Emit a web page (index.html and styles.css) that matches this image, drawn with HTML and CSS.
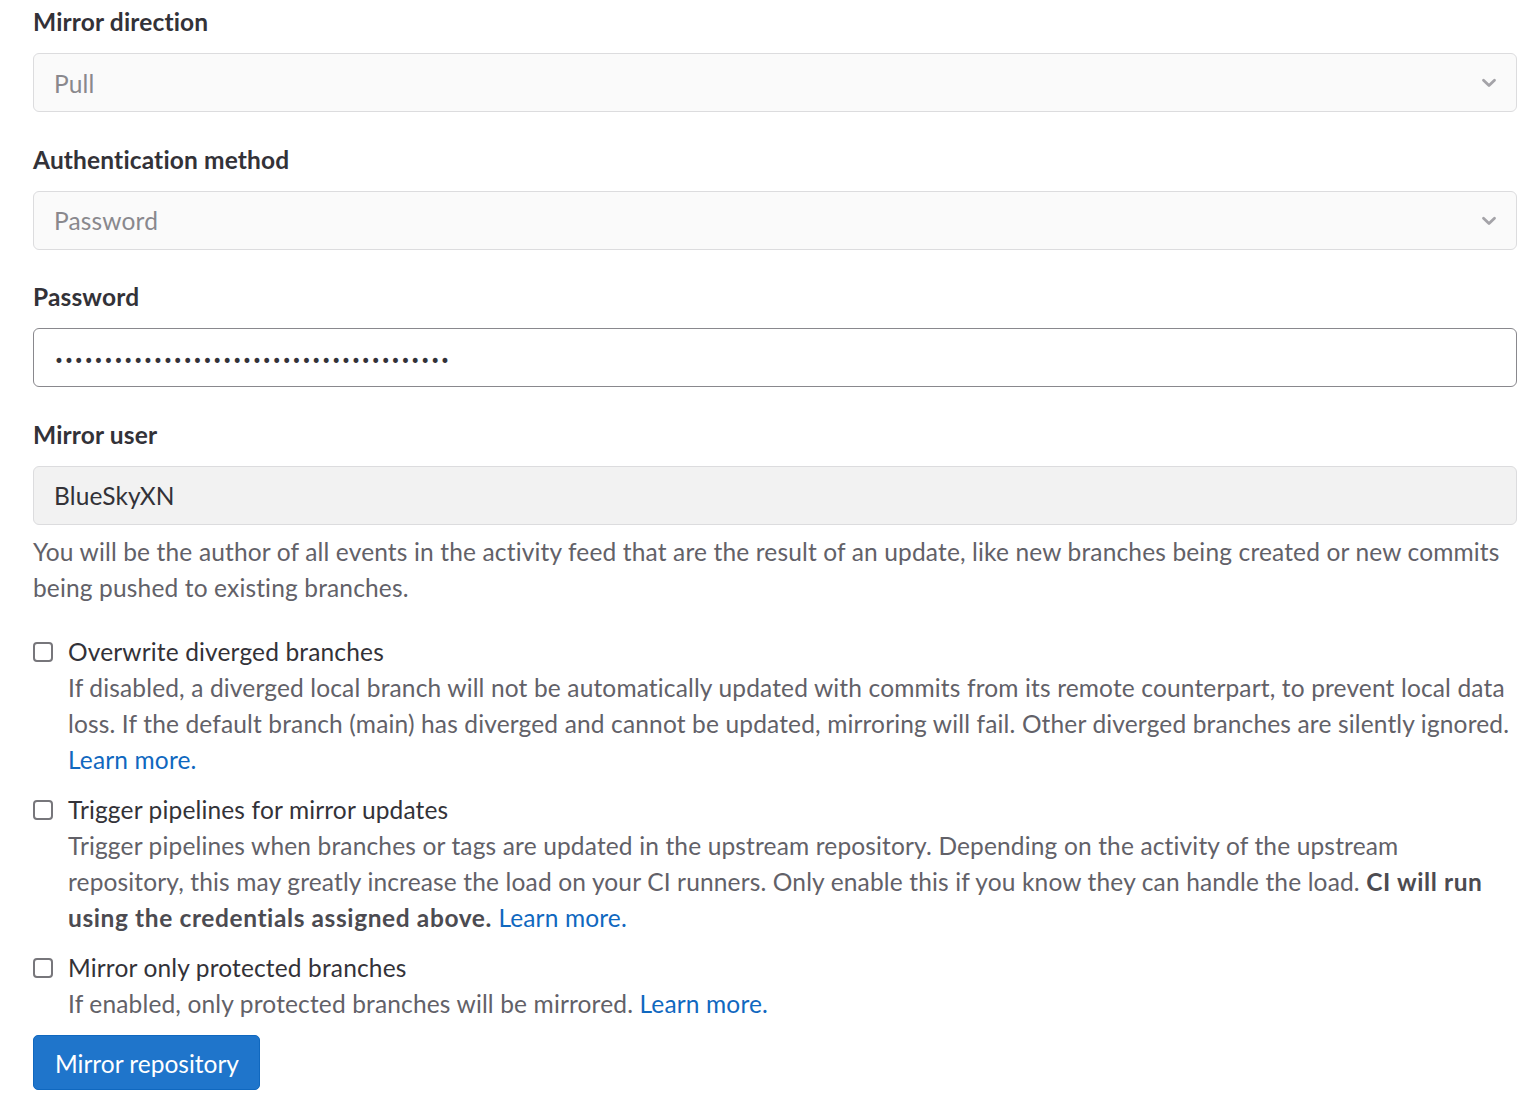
FILE: index.html
```html
<!DOCTYPE html>
<html lang="en">
<head>
<meta charset="utf-8">
<title>Mirror repository</title>
<link rel="stylesheet" href="styles.css">
</head>
<body>
<form class="mirror-form">
  <div class="form-group">
    <div class="label">Mirror direction</div>
    <div class="control select">
      <span class="placeholder">Pull</span>
      <svg class="chevron" width="16" height="16" viewBox="0 0 16 16"><path d="M2.5 5.2 L8 10.5 L13.5 5.2" fill="none" stroke="#a4a3a8" stroke-width="2.8" stroke-linecap="round" stroke-linejoin="round"/></svg>
    </div>
  </div>
  <div class="form-group">
    <div class="label">Authentication method</div>
    <div class="control select">
      <span class="placeholder">Password</span>
      <svg class="chevron" width="16" height="16" viewBox="0 0 16 16"><path d="M2.5 5.2 L8 10.5 L13.5 5.2" fill="none" stroke="#a4a3a8" stroke-width="2.8" stroke-linecap="round" stroke-linejoin="round"/></svg>
    </div>
  </div>
  <div class="form-group">
    <div class="label">Password</div>
    <div class="control password">
      <span class="dots">••••••••••••••••••••••••••••••••••••••••</span>
    </div>
  </div>
  <div class="form-group last">
    <div class="label">Mirror user</div>
    <div class="control readonly">BlueSkyXN</div>
    <p class="help">You will be the author of all events in the activity feed that are the result of an update, like new branches being created or new commits being pushed to existing branches.</p>
  </div>

  <div class="check first">
    <span class="box"></span>
    <div class="check-body">
      <div class="check-label">Overwrite diverged branches</div>
      <p class="help">If disabled, a diverged local branch will not be automatically updated with commits from its remote counterpart, to prevent local data loss. If the default branch (main) has diverged and cannot be updated, mirroring will fail. Other diverged branches are silently ignored. <a href="#">Learn more.</a></p>
    </div>
  </div>
  <div class="check">
    <span class="box"></span>
    <div class="check-body">
      <div class="check-label">Trigger pipelines for mirror updates</div>
      <p class="help">Trigger pipelines when branches or tags are updated in the upstream repository. Depending on the activity of the upstream repository, this may greatly increase the load on your CI runners. Only enable this if you know they can handle the load. <strong>CI will run using the credentials assigned above.</strong> <a href="#">Learn more.</a></p>
    </div>
  </div>
  <div class="check">
    <span class="box"></span>
    <div class="check-body">
      <div class="check-label">Mirror only protected branches</div>
      <p class="help">If enabled, only protected branches will be mirrored. <a href="#">Learn more.</a></p>
    </div>
  </div>
  <div class="actions">
    <button type="button" class="btn-primary">Mirror repository</button>
  </div>
</form>
</body>
</html>
```

FILE: styles.css
```css
html, body {
  margin: 0;
  padding: 0;
  background: #ffffff;
}
body {
  font-family: "Lato", "Open Sans", sans-serif;
  font-size: 24.5px;
  line-height: 36px;
  letter-spacing: 0.15px;
  color: #333238;
}
.mirror-form {
  padding: 4px 11px 0 33px;
}
.form-group {
  margin-bottom: 29.5px;
}
.form-group.last {
  margin-bottom: 28px;
}
.label {
  font-weight: 700;
  margin-bottom: 13px;
}
.control {
  box-sizing: border-box;
  height: 59px;
  border: 1px solid #dcdcde;
  border-radius: 6px;
  display: flex;
  align-items: center;
  padding: 2px 20px 0;
}
.select {
  background: #fafafa;
  justify-content: space-between;
  padding-right: 19px;
}
.placeholder {
  color: #89888d;
}
.chevron {
  margin-bottom: 1px;
}
.password {
  border-color: #89888d;
  background: #fff;
}
.dots {
  display: block;
  margin-top: 4px;
  color: #333238;
  font-family: "DejaVu Sans", sans-serif;
  font-size: 16.8px;
  letter-spacing: 0;
}
.readonly {
  background: #f2f2f2;
  color: #333238;
}
.help {
  margin: 9px 0 0;
  color: #626168;
}
.check {
  display: flex;
  margin-top: 14px;
}
.check.first {
  margin-top: 0;
}
.box {
  flex: none;
  box-sizing: border-box;
  width: 20px;
  height: 20px;
  border: 2px solid #77767b;
  border-radius: 4px;
  margin: 8px 15px 0 0;
}
.check-body {
  flex: 1;
}
.check-label {
  color: #333238;
}
.check .help {
  margin: 0;
}
.help a {
  color: #1068bf;
  text-decoration: none;
}
.help strong {
  font-weight: 700;
  letter-spacing: 0.6px;
  color: #4c4b51;
}
.actions {
  margin-top: 13px;
}
.btn-primary {
  font: inherit;
  white-space: nowrap;
  height: 55px;
  box-sizing: border-box;
  background: #1f75cb;
  border: 1px solid #1068bf;
  border-radius: 5px;
  color: #fff;
  padding: 3px 20px 0 21px;
  cursor: pointer;
}
```
